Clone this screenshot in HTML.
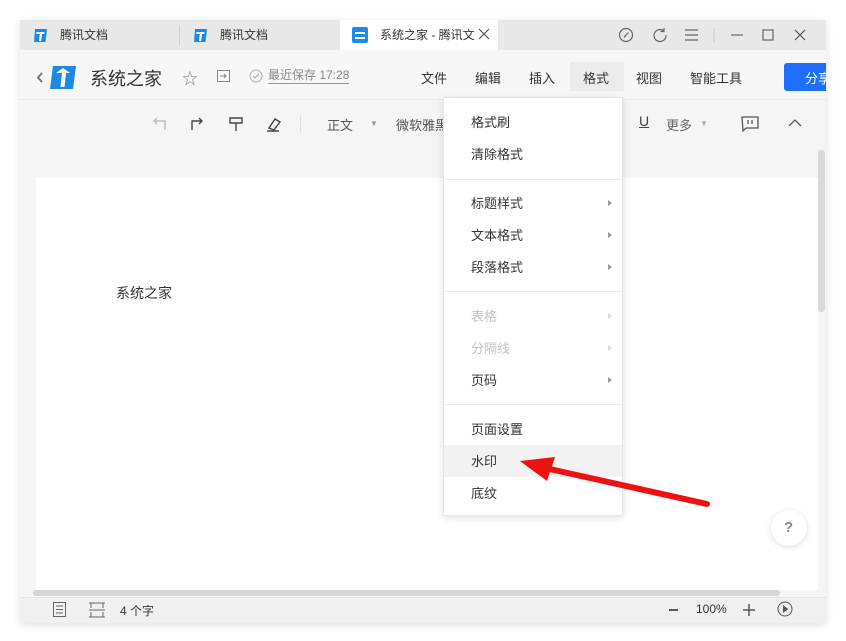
<!DOCTYPE html>
<html><head><meta charset="utf-8"><style>
*{margin:0;padding:0;box-sizing:border-box}
body{width:846px;height:641px;background:#fff;position:relative;overflow:hidden;font-family:"Liberation Sans","Noto Sans CJK SC",sans-serif;color:#333}
.a{position:absolute}
.t{font-size:13px;white-space:nowrap}
.mi{position:absolute;left:27px;font-size:13px;color:#333}
.dis{color:#c4c4c4}
.sub{position:absolute;left:164px;width:0;height:0;border-left:4px solid #999;border-top:3px solid transparent;border-bottom:3px solid transparent}
</style></head><body>
<div class="a" style="left:20px;top:20px;width:806px;height:603px;box-shadow:0 2px 8px rgba(0,0,0,.12);background:#f5f5f5"></div>
<div class="a" style="left:20px;top:20px;width:806px;height:30px;background:#e8e8e8"></div>
<div class="a" style="left:179px;top:25px;width:1px;height:20px;background:#d0d0d0"></div>
<div class="a" style="left:340px;top:20px;width:158px;height:30px;background:#fff"></div>
<svg class="a" style="left:33px;top:28px" width="15" height="15" viewBox="0 0 15 15"><path d="M2 1h12l-1.5 13H1z" fill="#1e88e5"/><path d="M3.5 4h8l-.4 2H9l-.8 7H6l.8-7H3.2z" fill="#fff"/></svg>
<div class="a t" style="left:60px;top:26px;font-size:12px">腾讯文档</div>
<svg class="a" style="left:193px;top:28px" width="15" height="15" viewBox="0 0 15 15"><path d="M2 1h12l-1.5 13H1z" fill="#1e88e5"/><path d="M3.5 4h8l-.4 2H9l-.8 7H6l.8-7H3.2z" fill="#fff"/></svg>
<div class="a t" style="left:220px;top:26px;font-size:12px">腾讯文档</div>
<div class="a" style="left:352px;top:27px;width:16px;height:16px;background:#1e88e5;border-radius:2px"></div>
<div class="a" style="left:355px;top:32px;width:10px;height:2px;background:#fff"></div>
<div class="a" style="left:355px;top:37px;width:10px;height:2px;background:#fff"></div>
<div class="a t" style="left:380px;top:26px;font-size:12px">系统之家 - 腾讯文</div>
<svg class="a" style="left:478px;top:28px" width="12" height="12" fill="none" stroke="#555" stroke-width="1.2"><path d="M1 1l10 10M11 1L1 11"/></svg>
<svg class="a" style="left:618px;top:27px" width="170" height="16" viewBox="0 0 170 16" fill="none" stroke="#666" stroke-width="1.2"><circle cx="8" cy="8" r="6.5"/><path d="M10.5 5.5L7 9 6 10.5 9 7"/><path d="M46 4a6 6 0 1 0 2 4M46 1v3.5h-3.5"/><path d="M67 3h13M67 8h13M67 13h13"/><path d="M96 1v14" stroke="#ccc"/><path d="M113 8h12"/><rect x="145" y="3" width="10" height="10"/></svg>
<svg class="a" style="left:794px;top:29px" width="12" height="12" fill="none" stroke="#555" stroke-width="1.2"><path d="M1 1l10 10M11 1L1 11"/></svg>
<div class="a" style="left:20px;top:50px;width:806px;height:50px;background:#f7f7f7;border-bottom:1px solid #e8e8e8"></div>
<svg class="a" style="left:36px;top:72px" width="7" height="11" fill="none" stroke="#777" stroke-width="2"><path d="M6 1L2 5.5 6 10"/></svg>
<svg class="a" style="left:49px;top:65px" width="28" height="25" viewBox="0 0 28 25"><path d="M4 1h23l-3 23H1z" fill="#1e88e5"/><path d="M7 8l7-5 7 5h-4l-1.5 14h-4L13 8z" fill="#fff"/></svg>
<div class="a t" style="left:90px;top:65px;font-size:18px;color:#333">系统之家</div>
<div class="a t" style="left:182px;top:65px;font-size:16px;color:#888">☆</div>
<svg class="a" style="left:217px;top:70px" width="13" height="12" viewBox="0 0 13 12" fill="none" stroke="#888"><rect x=".5" y=".5" width="12" height="11"/><path d="M3 6h6M7 4l2 2-2 2"/></svg>
<svg class="a" style="left:249px;top:69px" width="14" height="14" fill="none" stroke="#aaa"><circle cx="7" cy="7" r="6"/><path d="M4 7l2 2 4-4"/></svg>
<div class="a t" style="left:268px;top:68px;font-size:12px;color:#888;border-bottom:1px solid #999;line-height:15px">最近保存 17:28</div>
<div class="a t" style="left:421px;top:68px;color:#333">文件</div>
<div class="a t" style="left:475px;top:68px">编辑</div>
<div class="a t" style="left:529px;top:68px">插入</div>
<div class="a" style="left:570px;top:62px;width:54px;height:29px;background:#ebebeb"></div>
<div class="a t" style="left:583px;top:68px">格式</div>
<div class="a t" style="left:636px;top:68px">视图</div>
<div class="a t" style="left:690px;top:68px">智能工具</div>
<div class="a" style="left:784px;top:63px;width:42px;height:28px;background:#1e6fff;border-radius:3px 0 0 3px"></div>
<div class="a t" style="left:805px;top:68px;color:#fff">分享</div>
<svg class="a" style="left:150px;top:115px" width="140" height="18" viewBox="0 0 140 18" fill="none" stroke-width="1.4"><path d="M15 15V6H4M7 3L4 6l3 3" stroke="#bbb"/><path d="M42 15V6h10M49 3l3 3-3 3" stroke="#444"/><path d="M80 3h12v5H80zM86 8v8" stroke="#444"/><path d="M119 13l6-9 5 3-6 8zM117 16h12" stroke="#444"/></svg>
<div class="a" style="left:300px;top:116px;width:1px;height:16px;background:#ddd"></div>
<div class="a t" style="left:327px;top:115px;color:#555">正文</div>
<div class="a t" style="left:370px;top:119px;font-size:8px;color:#999">▼</div>
<div class="a t" style="left:396px;top:115px;color:#555">微软雅黑</div>
<div class="a t" style="left:639px;top:113px;color:#444;text-decoration:underline;font-size:14px">U</div>
<div class="a t" style="left:666px;top:115px;color:#666">更多</div>
<div class="a t" style="left:700px;top:119px;font-size:8px;color:#aaa">▼</div>
<svg class="a" style="left:741px;top:116px" width="18" height="16" fill="none" stroke="#555" stroke-width="1.3"><path d="M1 1h16v11H5l-3 3z"/><path d="M7 4v4M11 4v4"/></svg>
<svg class="a" style="left:788px;top:118px" width="14" height="9" fill="none" stroke="#555" stroke-width="1.3"><path d="M1 8l6-6 6 6"/></svg>
<div class="a" style="left:36px;top:178px;width:782px;height:412px;background:#fff"></div>
<div class="a" style="left:818px;top:150px;width:7px;height:162px;background:#d9d9d9;border-radius:3px"></div>
<div class="a t" style="left:116px;top:283px;font-size:14px">系统之家</div>
<div class="a" style="left:771px;top:510px;width:36px;height:36px;border-radius:50%;background:#fff;box-shadow:0 1px 6px rgba(0,0,0,.15)"></div>
<div class="a t" style="left:784px;top:519px;font-size:15px;color:#888;font-weight:bold">?</div>
<div class="a" style="left:33px;top:590px;width:747px;height:6px;background:#d6d6d6;border-radius:3px"></div>
<div class="a" style="left:20px;top:597px;width:806px;height:26px;background:#f0f0f0;border-top:1px solid #e4e4e4"></div>
<svg class="a" style="left:53px;top:602px" width="52" height="16" fill="none" stroke="#666"><rect x=".5" y=".5" width="12" height="14"/><path d="M3 4h7M3 7.5h7M3 11h7"/><path d="M36 1h16M36 15h16M36 8h16M38 1v5M50 1v5M38 10v5M50 10v5" stroke-width="1"/></svg>
<div class="a t" style="left:120px;top:602px;font-size:12px">4 个字</div>
<div class="a" style="left:669px;top:609px;width:9px;height:2px;background:#555"></div>
<div class="a t" style="left:696px;top:602px;font-size:12px">100%</div>
<svg class="a" style="left:743px;top:604px" width="12" height="12" stroke="#555" stroke-width="1.5"><path d="M6 0v12M0 6h12"/></svg>
<svg class="a" style="left:777px;top:601px" width="16" height="16" fill="none" stroke="#555"><circle cx="8" cy="8" r="7"/><path d="M6.5 5v6l4-3z" fill="#555"/></svg>
<div class="a" style="left:443px;top:97px;width:180px;height:419px;background:#fff;border:1px solid #e6e6e6;box-shadow:0 2px 8px rgba(0,0,0,.12)">
<div class="mi" style="top:14px">格式刷</div>
<div class="mi" style="top:46px">清除格式</div>
<div class="a" style="left:0;top:81px;width:178px;height:1px;background:#eee"></div>
<div class="mi" style="top:95px">标题样式</div><div class="sub" style="top:102px"></div>
<div class="mi" style="top:127px">文本格式</div><div class="sub" style="top:134px"></div>
<div class="mi" style="top:159px">段落格式</div><div class="sub" style="top:166px"></div>
<div class="a" style="left:0;top:193px;width:178px;height:1px;background:#eee"></div>
<div class="mi dis" style="top:208px">表格</div><div class="sub" style="top:215px;border-left-color:#ddd"></div>
<div class="mi dis" style="top:240px">分隔线</div><div class="sub" style="top:247px;border-left-color:#ddd"></div>
<div class="mi" style="top:272px">页码</div><div class="sub" style="top:279px"></div>
<div class="a" style="left:0;top:306px;width:178px;height:1px;background:#eee"></div>
<div class="mi" style="top:321px">页面设置</div>
<div class="a" style="left:0;top:347px;width:178px;height:32px;background:#f2f2f2"></div>
<div class="mi" style="top:353px">水印</div>
<div class="mi" style="top:385px">底纹</div>
</div>
<svg class="a" style="left:0;top:0" width="846" height="641"><path d="M707 504L545 468" stroke="#ee1111" stroke-width="6" stroke-linecap="round"/><path d="M520 461L555 457 547 481z" fill="#ee1111"/></svg>
</body></html>
